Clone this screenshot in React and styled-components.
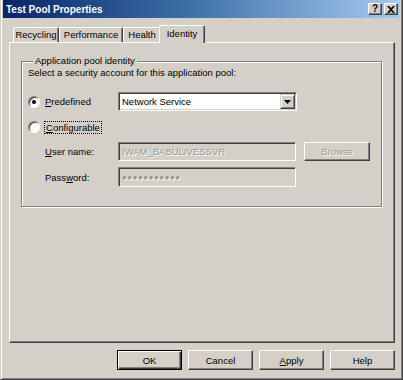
import React from "react";
import styled, { createGlobalStyle } from "styled-components";

const Global = createGlobalStyle`
  html, body { margin: 0; padding: 0; background: #d4d0c8; }
  body { font-family: "Liberation Sans", Arial, sans-serif; font-size: 9.5px; color: #000; }
  * { box-sizing: border-box; }
`;

const Window = styled.div`
  width: 403px;
  height: 380px;
  background: #d4d0c8;
  border-left: 1px solid #d4d0c8;
  border-right: 1px solid #404040;
  border-bottom: 1px solid #404040;
  box-shadow: inset 1px 0 #fff, inset -1px 0 #808080, inset 0 -1px #808080;
  padding: 0 2px 2px 2px;
  display: flex;
  flex-direction: column;
`;

const TitleBar = styled.div`
  height: 18px;
  background: linear-gradient(to right, #0a246a 0%, #3a6ea5 45%, #a6caf0 100%);
  display: flex;
  align-items: center;
  padding: 0 2px 0 3px;
`;

const Title = styled.div`
  flex: 1;
  color: #fff;
  font-weight: bold;
  font-size: 10px;
`;

const CaptionButton = styled.div`
  width: 14px;
  height: 12px;
  margin-left: 2px;
  background: #d4d0c8;
  border: 1px solid;
  border-color: #fff #404040 #404040 #fff;
  box-shadow: inset -1px -1px #808080;
  display: flex;
  align-items: center;
  justify-content: center;
  font-weight: bold;
  font-size: 10px;
  line-height: 1;
  color: #000;
`;

const Body = styled.div`
  flex: 1;
  display: flex;
  flex-direction: column;
  padding: 7px 5px 0 6px;
`;

const TabRow = styled.div`
  display: flex;
  align-items: flex-end;
  height: 17px;
  padding-left: 4px;
  position: relative;
  z-index: 1;
`;

const Tab = styled.div`
  width: ${(p) => p.$w}px;
  height: ${(p) => (p.$active ? 18 : 15)}px;
  margin: ${(p) => (p.$active ? "0 -2px -1px -2px" : "0")};
  background: #d4d0c8;
  border-top: 1px solid #fff;
  border-left: 1px solid #fff;
  border-right: 1px solid #404040;
  border-top-left-radius: 2px;
  border-top-right-radius: 2px;
  box-shadow: inset -1px 0 #808080;
  display: flex;
  justify-content: center;
  padding-top: ${(p) => (p.$active ? 2 : 1)}px;
  white-space: nowrap;
`;

const Panel = styled.div`
  flex: 1;
  border-top: 1px solid #fff;
  border-left: 1px solid #fff;
  border-right: 1px solid #404040;
  border-bottom: 1px solid #404040;
  box-shadow: inset -1px -1px #808080;
  padding: 12px 12px 0 11px;
`;

const Group = styled.fieldset`
  margin: 0;
  padding: 0 6px 19px 6px;
  border: 1px solid #808080;
  box-shadow: inset 1px 1px #fff, 1px 1px #fff;
  display: flex;
  flex-direction: column;
`;

const Legend = styled.legend`
  padding: 0 2px;
  margin-left: 5px;
  background: #d4d0c8;
  line-height: 12px;
`;

const Text = styled.div`
  line-height: 12px;
  margin-top: ${(p) => p.$mt || 0}px;
`;

const Row = styled.div`
  display: flex;
  align-items: center;
  height: ${(p) => p.$h}px;
  margin-top: ${(p) => p.$mt || 0}px;
  padding-left: ${(p) => p.$indent || 0}px;
`;

const RadioLabel = styled.div`
  width: ${(p) => p.$w}px;
  display: flex;
  align-items: center;
`;

const Radio = styled.span`
  width: 12px;
  height: 12px;
  border-radius: 50%;
  background: #fff;
  border: 1px solid;
  border-color: #808080 #fff #fff #808080;
  box-shadow: inset 1px 1px #404040;
  display: inline-flex;
  align-items: center;
  justify-content: center;
  margin-right: 5px;
  flex: none;
  &::after {
    content: "";
    width: 4px;
    height: 4px;
    border-radius: 50%;
    background: ${(p) => (p.$checked ? "#000" : "transparent")};
  }
`;

const Focus = styled.span`
  outline: 1px dotted #000;
  outline-offset: 0;
  padding: 0 1px;
  line-height: 11px;
`;

const FieldLabel = styled.div`
  width: 73px;
`;

const Field = styled.div`
  width: ${(p) => p.$w}px;
  height: ${(p) => p.$h || 19}px;
  background: ${(p) => (p.$disabled ? "#d4d0c8" : "#fff")};
  border: 1px solid;
  border-color: #808080 #fff #fff #808080;
  box-shadow: inset 1px 1px #404040, inset -1px -1px #d4d0c8;
  display: flex;
  align-items: center;
  padding: 0 2px 0 3px;
  color: ${(p) => (p.$disabled ? "#9a968e" : "#000")};
  text-shadow: ${(p) => (p.$disabled ? "1px 1px #fff" : "none")};
  white-space: nowrap;
  overflow: hidden;
`;

const FieldText = styled.span`
  flex: 1;
`;

const DropArrow = styled.span`
  width: 15px;
  height: 15px;
  background: #d4d0c8;
  border: 1px solid;
  border-color: #d4d0c8 #404040 #404040 #d4d0c8;
  box-shadow: inset 1px 1px #fff, inset -1px -1px #808080;
  display: flex;
  align-items: center;
  justify-content: center;
  margin-right: -1px;
`;

const Dots = styled.span`
  letter-spacing: 0.5px;
  font-size: 8px;
`;

const Button = styled.div`
  width: ${(p) => p.$w || 65}px;
  height: ${(p) => p.$h || 20}px;
  background: #d4d0c8;
  border: 1px solid;
  border-color: ${(p) => (p.$default ? "#000" : "#fff #404040 #404040 #fff")};
  box-shadow: ${(p) =>
    p.$default
      ? "inset 1px 1px #fff, inset -1px -1px #404040, inset -2px -2px #808080"
      : "inset -1px -1px #808080"};
  display: flex;
  align-items: center;
  justify-content: center;
  color: ${(p) => (p.$disabled ? "#9a968e" : "#000")};
  text-shadow: ${(p) => (p.$disabled ? "1px 1px #fff" : "none")};
  margin-left: ${(p) => p.$ml || 0}px;
`;

const ButtonRow = styled.div`
  display: flex;
  justify-content: flex-end;
  gap: 6px;
  padding: 7px 0 7px 0;
`;

const U = styled.span`
  text-decoration: underline;
`;

export default function App() {
  return (
    <>
      <Global />
      <Window>
        <TitleBar>
          <Title>Test Pool Properties</Title>
          <CaptionButton>?</CaptionButton>
          <CaptionButton>
            <svg width="8" height="7" viewBox="0 0 8 7">
              <path d="M0 0h2l2 2 2-2h2L5 3.5 8 7H6L4 5 2 7H0l3-3.5z" fill="#000" />
            </svg>
          </CaptionButton>
        </TitleBar>
        <Body>
          <TabRow>
            <Tab $w={46}>Recycling</Tab>
            <Tab $w={64}>Performance</Tab>
            <Tab $w={38}>Health</Tab>
            <Tab $w={46} $active>Identity</Tab>
          </TabRow>
          <Panel>
            <Group>
              <Legend>Application pool identity</Legend>
              <Text $mt={0}>Select a security account for this application pool:</Text>
              <Row $h={19} $mt={13}>
                <RadioLabel $w={90}>
                  <Radio $checked />
                  <span><U>P</U>redefined</span>
                </RadioLabel>
                <Field $w={179}>
                  <FieldText>Network Service</FieldText>
                  <DropArrow>
                    <svg width="7" height="4" viewBox="0 0 7 4">
                      <path d="M0 0h7L3.5 4z" fill="#000" />
                    </svg>
                  </DropArrow>
                </Field>
              </Row>
              <Row $h={14} $mt={9}>
                <RadioLabel $w={90}>
                  <Radio />
                  <Focus><U>C</U>onfigurable</Focus>
                </RadioLabel>
              </Row>
              <Row $h={19} $mt={8} $indent={17}>
                <FieldLabel><U>U</U>ser name:</FieldLabel>
                <Field $w={178} $disabled>IWAM_BABULIVESSVR</Field>
                <Button $w={66} $h={19} $ml={8} $disabled>Browse</Button>
              </Row>
              <Row $h={20} $mt={6} $indent={17}>
                <FieldLabel>Pass<U>w</U>ord:</FieldLabel>
                <Field $w={178} $h={20} $disabled>
                  <Dots>●●●●●●●●●●●</Dots>
                </Field>
              </Row>
            </Group>
          </Panel>
          <ButtonRow>
            <Button $default>OK</Button>
            <Button>Cancel</Button>
            <Button><span><U>A</U>pply</span></Button>
            <Button>Help</Button>
          </ButtonRow>
        </Body>
      </Window>
    </>
  );
}
